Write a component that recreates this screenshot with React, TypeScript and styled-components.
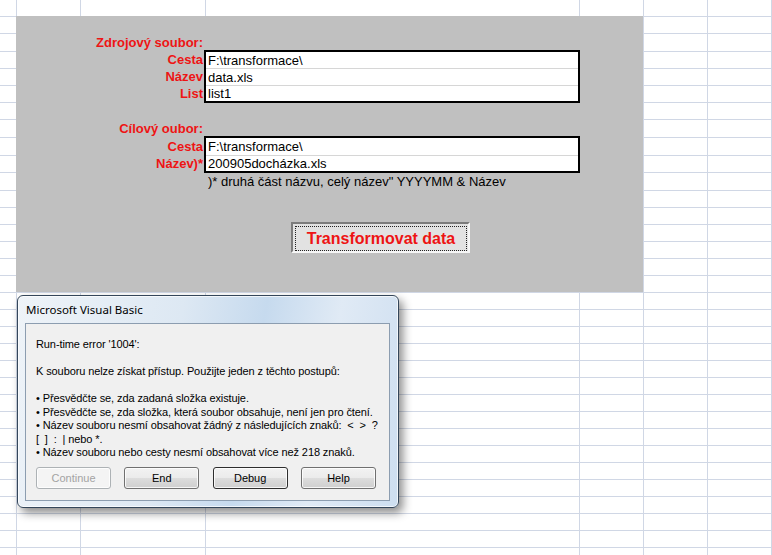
import React from "react";
import styled, { createGlobalStyle } from "styled-components";

// sheet geometry, in px (Excel rows / columns as they appear on screen)
const ROWS = [16, 17, 18, 17, 17, 17, 17, 18, 18, 17, 18, 17, 17, 17, 17, 17, 17, ...Array(15).fill(17), 8];
const COLS = [16, 64, 125, 374, 64, 64, 64, 1];

const GlobalStyle = createGlobalStyle`
  html, body {
    margin: 0;
    padding: 0;
    background: #fff;
    overflow: hidden;
  }
  * {
    box-sizing: border-box;
  }
`;

const App = () => {
  const cells: { r: number; c: number }[] = [];
  ROWS.forEach((_, r) =>
    COLS.forEach((_, c) => {
      // merged grey block covers B2:E17
      if (r >= 1 && r <= 16 && c >= 1 && c <= 4) return;
      cells.push({ r, c });
    })
  );

  return (
    <>
      <GlobalStyle />
      <Sheet>
        {cells.map(({ r, c }) => (
          <Cell key={`${r}-${c}`} $r={r} $c={c} />
        ))}
        <Shaded />

        {/* ===== source ===== */}
        <Label $r={2}>Zdrojový soubor:</Label>
        <Label $r={3}>Cesta</Label>
        <Label $r={4}>Název</Label>
        <Label $r={5}>List</Label>
        <FieldBox $r={3} $span={3}>
          <FieldRow $h={17}>F:\transformace\</FieldRow>
          <FieldRow $h={17}>data.xls</FieldRow>
          <FieldRow>list1</FieldRow>
        </FieldBox>

        {/* ===== target ===== */}
        <Label $r={7}>Cílový oubor:</Label>
        <Label $r={8}>Cesta</Label>
        <Label $r={9}>Název)*</Label>
        <FieldBox $r={8} $span={2}>
          <FieldRow $h={18}>F:\transformace\</FieldRow>
          <FieldRow>200905docházka.xls</FieldRow>
        </FieldBox>
        <Note>)* druhá část názvu, celý název" YYYYMM &amp; Název</Note>

        <ButtonSlot>
          <RunButton>
            <FocusRing>Transformovat data</FocusRing>
          </RunButton>
        </ButtonSlot>

        {/* ===== VBA error box ===== */}
        <Dialog>
          <TitleBar>Microsoft Visual Basic</TitleBar>
          <Client>
            <Message>
              <Para>Run-time error '1004':</Para>
              <Para>K souboru nelze získat přístup. Použijte jeden z těchto postupů:</Para>
              <Line>• Přesvědčte se, zda zadaná složka existuje.</Line>
              <Line>• Přesvědčte se, zda složka, která soubor obsahuje, není jen pro čtení.</Line>
              <Line>• Název souboru nesmí obsahovat žádný z následujících znaků:  &lt;  &gt;  ?</Line>
              <Line>[  ]  :  | nebo *.</Line>
              <Line>• Název souboru nebo cesty nesmí obsahovat více než 218 znaků.</Line>
            </Message>
            <ButtonRow>
              <DlgButton disabled>Continue</DlgButton>
              <DlgButton>End</DlgButton>
              <DlgButton $default>Debug</DlgButton>
              <DlgButton>Help</DlgButton>
            </ButtonRow>
          </Client>
        </Dialog>
      </Sheet>
    </>
  );
};

export default App;

const Sheet = styled.div`
  position: relative;
  width: 772px;
  height: 555px;
  display: grid;
  grid-template-columns: ${COLS.map((c) => `${c}px`).join(" ")};
  grid-template-rows: ${ROWS.map((r) => `${r}px`).join(" ")};
  font-family: "Liberation Sans", Arial, sans-serif;
  font-size: 13px;
  background: #fff;
  overflow: hidden;
`;
const Cell = styled.div<{ $r: number; $c: number }>`
  grid-row: ${(p) => p.$r + 1};
  grid-column: ${(p) => p.$c + 1};
  border-top: ${(p) => (p.$r === 0 ? "none" : "1px solid #d0d7e5")};
  border-left: ${(p) => (p.$c === 0 ? "none" : "1px solid #d0d7e5")};
`;
const Shaded = styled.div`
  grid-row: 2 / span 16;
  grid-column: 2 / span 4;
  background: #c0c0c0;
`;
const Label = styled.div<{ $r: number }>`
  grid-row: ${(p) => p.$r + 1};
  grid-column: 3;
  display: flex;
  align-items: center;
  justify-content: flex-end;
  padding-right: 2px;
  color: #ee1414;
  font-weight: bold;
  white-space: nowrap;
`;
const FieldBox = styled.div<{ $r: number; $span: number }>`
  grid-row: ${(p) => p.$r + 1} / span ${(p) => p.$span};
  grid-column: 4;
  margin: -1px;
  border: 2px solid #000;
  background: #fff;
  display: flex;
  flex-direction: column;
`;
const FieldRow = styled.div<{ $h?: number }>`
  height: ${(p) => (p.$h ? `${p.$h}px` : "auto")};
  flex: ${(p) => (p.$h ? "none" : 1)};
  display: flex;
  align-items: center;
  padding-left: 2px;
  border-bottom: 1px solid #d6d6d6;
  color: #000;
  white-space: nowrap;
  &:last-child {
    border-bottom: none;
  }
`;
const Note = styled.div`
  grid-row: 11;
  grid-column: 4;
  display: flex;
  align-items: center;
  padding-left: 3px;
  color: #000;
  white-space: nowrap;
`;
const ButtonSlot = styled.div`
  grid-row: 13 / span 3;
  grid-column: 4;
  padding: 15px 0 0 86px;
`;
const RunButton = styled.button`
  width: 179px;
  height: 31px;
  padding: 2px 1px 0 2px;
  border: 2px solid;
  border-color: #7c7c7c #f6f6f6 #f6f6f6 #7c7c7c;
  background: #e2e2e2;
  font-family: "Liberation Sans", Arial, sans-serif;
  font-size: 16px;
  font-weight: bold;
  color: #ee1414;
  cursor: pointer;
`;
const FocusRing = styled.span`
  display: flex;
  align-items: center;
  justify-content: center;
  width: 100%;
  height: 100%;
  border: 1px dotted #222;
`;
const Dialog = styled.div`
  position: absolute;
  left: 17px;
  top: 295px;
  width: 382px;
  height: 213px;
  display: flex;
  flex-direction: column;
  padding: 0 8px 6px 7px;
  border: 1px solid #34465a;
  border-radius: 6px;
  background: linear-gradient(
    100deg,
    #eef3f8 0%,
    #dde8f3 40%,
    #c6daee 60%,
    #e0eaf5 78%,
    #cddef0 100%
  );
  box-shadow: inset 0 0 0 1px rgba(255, 255, 255, 0.7),
    4px 5px 10px rgba(0, 0, 0, 0.45);
`;
const TitleBar = styled.div`
  height: 27px;
  display: flex;
  align-items: center;
  padding-left: 1px;
  font-family: "Noto Sans", "Liberation Sans", sans-serif;
  font-size: 11.5px;
  color: #000;
`;
const Client = styled.div`
  flex: 1;
  display: flex;
  flex-direction: column;
  padding: 14px 13px 11px 10px;
  border: 1px solid #8c9db0;
  background: #f0f0f0;
  font-family: "Liberation Sans", Arial, sans-serif;
  font-size: 11px;
  color: #000;
`;
const Message = styled.div`
  height: 120.5px;
  clip-path: inset(0 -40px 0 0);
  line-height: 13.5px;
  letter-spacing: -0.1px;
  white-space: pre;
`;
const Para = styled.div`
  margin-bottom: 13.5px;
`;
const Line = styled.div``;
const ButtonRow = styled.div`
  margin-top: auto;
  display: flex;
  justify-content: space-between;
`;
const DlgButton = styled.button<{ $default?: boolean }>`
  width: 75px;
  height: 22px;
  padding: 0;
  border: 1px solid ${(p) => (p.$default ? "#2e2e2e" : "#707070")};
  border-radius: 3px;
  background: linear-gradient(#f2f2f2 0%, #ebebeb 50%, #dddddd 51%, #cfcfcf 100%);
  box-shadow: inset 0 0 0 1px rgba(255, 255, 255, 0.8);
  font-family: "Liberation Sans", Arial, sans-serif;
  font-size: 11px;
  color: #000;
  &:disabled {
    color: #a3a3a3;
    border-color: #adb2b5;
    background: #f4f4f4;
  }
`;
